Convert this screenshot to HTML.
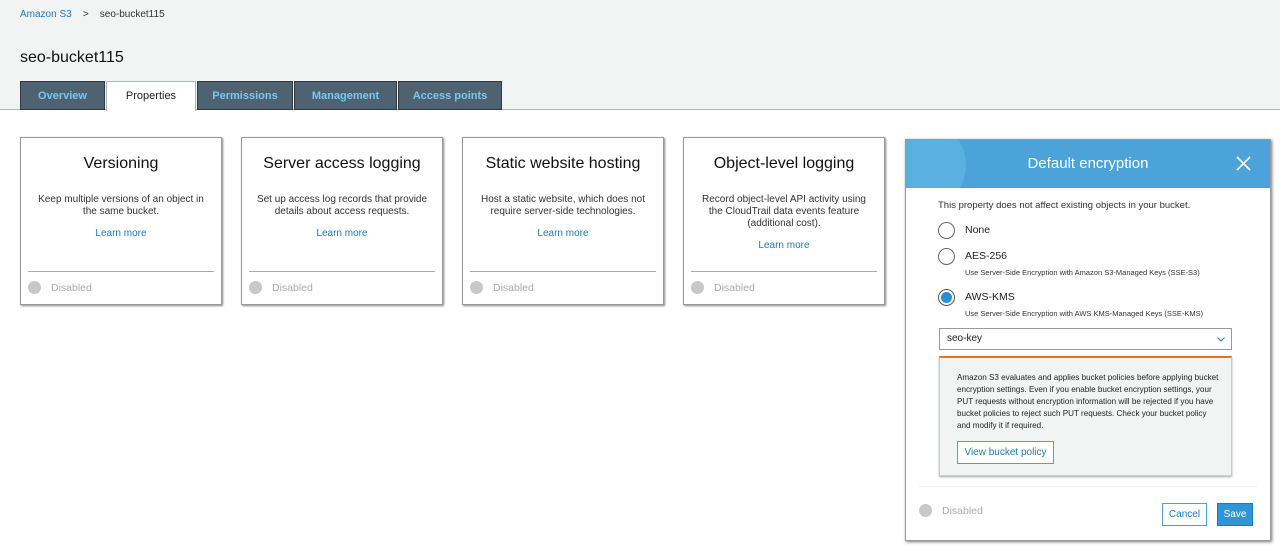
<!DOCTYPE html>
<html><head><style>
*{box-sizing:border-box;margin:0;padding:0}
body{width:1280px;height:550px;background:#fff;font-family:"Liberation Sans",Arial,sans-serif;position:relative;overflow:hidden;color:#222}
.top{position:absolute;left:0;top:0;width:1280px;height:110px;background:#f2f3f3;border-bottom:1px solid #aab7b8}
.bc{position:absolute;left:20px;top:9px;font-size:10px;color:#333}
.bc a{color:#1a7bb9;text-decoration:none}
h1{position:absolute;left:20px;top:49px;font-size:16px;font-weight:normal;color:#111}
.tab{position:absolute;top:81px;height:29px;background:#4f6272;border:1px solid #2b3a45;color:#79c8ee;font-size:11px;font-weight:bold;text-align:center;line-height:28px}
.tab.on{background:#fff;color:#222;border-color:#aab7b8;border-bottom:none;height:30px;font-weight:normal}
.card{position:absolute;top:137px;width:202px;height:168px;border:1px solid #999;box-shadow:1px 1px 2px #888;background:#fff;text-align:center}
.card h2{font-size:16px;font-weight:normal;margin-top:17px;color:#111}
.card p{font-size:10px;color:#333;margin:21px 12px 0;line-height:12px}
.card .lm{font-size:10px;color:#1a7bb9;margin-top:10px}
.card .ft{position:absolute;left:7px;right:7px;top:133px;border-top:1px solid #aaa}
.dis{position:absolute;font-size:10.5px;color:#aaa}
.dot{position:absolute;width:13px;height:13px;border-radius:50%;background:#c8c8c8}
.panel{position:absolute;left:905px;top:139px;width:366px;height:402px;border:1px solid #999;box-shadow:1px 1px 3px #777;background:#fff}
.ph{height:48px;background:#4ba3d9;color:#fff;font-size:15px;text-align:center;line-height:47px;position:relative;overflow:hidden}
.radio{position:absolute;width:17px;height:17px;border-radius:50%;border:1px solid #666;background:#fff}
.sm{position:absolute;font-size:7.5px;color:#333}
</style></head><body>
<div class="top">
<div class="bc"><a>Amazon S3</a>&nbsp;&nbsp;&nbsp;&nbsp;&gt;&nbsp;&nbsp;&nbsp;&nbsp;seo-bucket115</div>
<h1>seo-bucket115</h1>
<div class="tab" style="left:20px;width:85px">Overview</div>
<div class="tab on" style="left:106px;width:90px">Properties</div>
<div class="tab" style="left:197px;width:96px">Permissions</div>
<div class="tab" style="left:294px;width:103px">Management</div>
<div class="tab" style="left:398px;width:104px">Access points</div>
</div>

<div class="card" style="left:20px"><h2>Versioning</h2><p>Keep multiple versions of an object in the same bucket.</p><div class="lm">Learn more</div><div class="ft"></div><div class="dot" style="left:7px;top:143px"></div><div class="dis" style="left:30px;top:144px">Disabled</div></div>
<div class="card" style="left:241px"><h2>Server access logging</h2><p>Set up access log records that provide details about access requests.</p><div class="lm">Learn more</div><div class="ft"></div><div class="dot" style="left:7px;top:143px"></div><div class="dis" style="left:30px;top:144px">Disabled</div></div>
<div class="card" style="left:462px"><h2>Static website hosting</h2><p>Host a static website, which does not require server-side technologies.</p><div class="lm">Learn more</div><div class="ft"></div><div class="dot" style="left:7px;top:143px"></div><div class="dis" style="left:30px;top:144px">Disabled</div></div>
<div class="card" style="left:683px"><h2>Object-level logging</h2><p>Record object-level API activity using the CloudTrail data events feature (additional cost).</p><div class="lm">Learn more</div><div class="ft"></div><div class="dot" style="left:7px;top:143px"></div><div class="dis" style="left:30px;top:144px">Disabled</div></div>

<div class="panel">
<div class="ph"><div style="position:absolute;left:-30px;top:-20px;width:90px;height:90px;border-radius:50%;background:#5ab0e0"></div><span style="position:relative">Default encryption</span>
<svg style="position:absolute;right:19px;top:16px" width="15" height="15"><path d="M1 1L14 14M14 1L1 14" stroke="#fff" stroke-width="1.6"/></svg></div>
<div style="position:absolute;left:32px;top:60px;font-size:9.5px;color:#333">This property does not affect existing objects in your bucket.</div>
<div class="radio" style="left:32px;top:82px"></div><div style="position:absolute;left:59px;top:84px;font-size:10.5px">None</div>
<div class="radio" style="left:32px;top:108px"></div><div style="position:absolute;left:59px;top:110px;font-size:10.5px">AES-256</div>
<div class="sm" style="left:59px;top:128px">Use Server-Side Encryption with Amazon S3-Managed Keys (SSE-S3)</div>
<div class="radio" style="left:32px;top:149px;border-color:#555"><div style="margin:2px;width:11px;height:11px;border-radius:50%;background:#2a8fd6"></div></div><div style="position:absolute;left:59px;top:151px;font-size:10.5px">AWS-KMS</div>
<div class="sm" style="left:59px;top:169px">Use Server-Side Encryption with AWS KMS-Managed Keys (SSE-KMS)</div>
<div style="position:absolute;left:33px;top:188px;width:293px;height:22px;border:1px solid #999;font-size:10px;line-height:20px;padding-left:7px">seo-key<svg style="position:absolute;right:6px;top:8px" width="8" height="5"><path d="M0.5 0.5L4 4L7.5 0.5" stroke="#1a7bb9" fill="none"/></svg></div>
<div style="position:absolute;left:33px;top:216px;width:293px;height:120px;background:#f2f3f3;border:1px solid #ccc;border-top:2px solid #e8731c;box-shadow:0 1px 2px #aaa">
<div style="position:absolute;left:17px;top:14px;width:262px;font-size:8.1px;line-height:12px;color:#222">Amazon S3 evaluates and applies bucket policies before applying bucket encryption settings. Even if you enable bucket encryption settings, your PUT requests without encryption information will be rejected if you have bucket policies to reject such PUT requests. Check your bucket policy and modify it if required.</div>
<div style="position:absolute;left:17px;top:83px;width:97px;height:23px;border:1px solid #4ba3d9;background:#fff;color:#1a7bb9;font-size:10px;text-align:center;line-height:21px">View bucket policy</div>
</div>
<div style="position:absolute;left:13px;right:13px;top:346px;border-top:1px solid #eee"></div>
<div class="dot" style="left:13px;top:364px"></div><div class="dis" style="left:36px;top:365px">Disabled</div>
<div style="position:absolute;left:256px;top:363px;width:45px;height:23px;border:1px solid #4ba3d9;color:#1a7bb9;font-size:10px;text-align:center;line-height:21px">Cancel</div>
<div style="position:absolute;left:311px;top:363px;width:36px;height:23px;background:#2e95d7;border:1px solid #1a7bb9;color:#fff;font-size:10px;text-align:center;line-height:21px">Save</div>
</div>
</body></html>
